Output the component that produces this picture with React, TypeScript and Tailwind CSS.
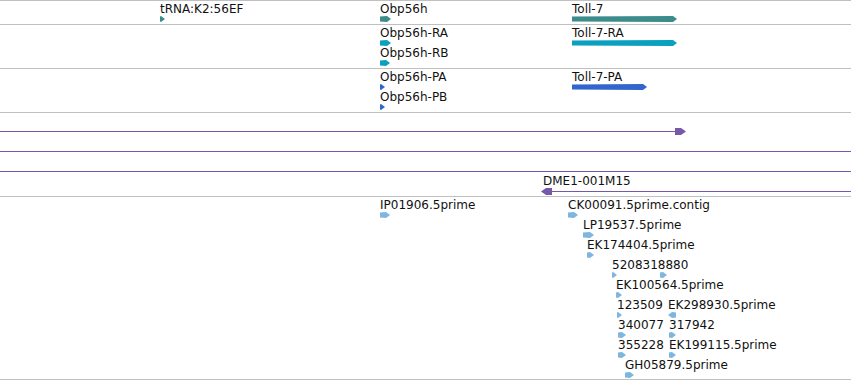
type Feat = {
  label?: string;
  lx?: number;
  x: number;
  w: number;
  row: number;
  dir?: "r" | "l";
  color: string;
};

const TEAL = "#3c8c8c";
const CYAN = "#0aa0bf";
const BLUE = "#3366cc";
const EST = "#7eb6e0";
const PURPLE = "#7659a8";

function Glyph({ w, dir = "r", color }: { w: number; dir?: "r" | "l"; color: string }) {
  const tip = Math.min(4, w);
  const pts =
    dir === "r"
      ? `0,0.5 ${w - tip},0 ${w},3 ${w - tip},6 0,5.5`
      : `${w},0.5 ${tip},0 0,3 ${tip},6 ${w},5.5`;
  return (
    <svg width={w} height={6} className="block">
      <polygon points={pts} fill={color} />
    </svg>
  );
}

// features sit at their genome coordinates on the track canvas
function Feature({ f }: { f: Feat }) {
  const top = f.row * 20;
  return (
    <>
      {f.label && (
        <div
          className="absolute whitespace-nowrap leading-[14px] text-[#111]"
          style={{ left: f.lx ?? f.x, top: top + 1 }}
        >
          {f.label}
        </div>
      )}
      <div className="absolute" style={{ left: f.x, top: top + 15 }}>
        <Glyph w={f.w} dir={f.dir} color={f.color} />
      </div>
    </>
  );
}

const genes: Feat[] = [
  { label: "tRNA:K2:56EF", x: 160, w: 5, row: 0, color: TEAL },
  { label: "Obp56h", x: 380, w: 11, row: 0, color: TEAL },
  { label: "Toll-7", x: 572, w: 105, row: 0, color: TEAL },
];

const transcripts: Feat[] = [
  { label: "Obp56h-RA", x: 380, w: 11, row: 0, color: CYAN },
  { label: "Obp56h-RB", x: 380, w: 10, row: 1, color: CYAN },
  { label: "Toll-7-RA", x: 572, w: 105, row: 0, color: CYAN },
];

const proteins: Feat[] = [
  { label: "Obp56h-PA", x: 380, w: 5, row: 0, color: BLUE },
  { label: "Obp56h-PB", x: 380, w: 5, row: 1, color: BLUE },
  { label: "Toll-7-PA", x: 572, w: 75, row: 0, color: BLUE },
];

const ests: Feat[] = [
  { label: "IP01906.5prime", x: 380, w: 10, row: 0, color: EST },
  { label: "CK00091.5prime.contig", x: 568, w: 10, row: 0, color: EST },
  { label: "LP19537.5prime", x: 583, w: 11, row: 1, color: EST },
  { label: "EK174404.5prime", x: 587, w: 7, row: 2, color: EST },
  { label: "5208318880", x: 612, w: 5, row: 3, color: EST },
  { x: 660, w: 7, row: 3, color: EST },
  { label: "EK100564.5prime", x: 616, w: 6, row: 4, color: EST },
  { label: "123509", x: 617, w: 5, row: 5, color: EST },
  { label: "EK298930.5prime", x: 668, w: 8, row: 5, dir: "l", color: EST },
  { label: "340077", x: 618, w: 8, row: 6, color: EST },
  { label: "317942", x: 669, w: 7, row: 6, color: EST },
  { label: "355228", x: 618, w: 8, row: 7, color: EST },
  { label: "EK199115.5prime", x: 669, w: 7, row: 7, color: EST },
  { label: "GH05879.5prime", x: 625, w: 9, row: 8, color: EST },
];

function Track({ h, feats, last }: { h: string; feats: Feat[]; last?: boolean }) {
  return (
    <div className={`relative border-t border-[#c0c0c0] ${h} ${last ? "border-b" : ""}`}>
      {feats.map((f, i) => (
        <Feature key={i} f={f} />
      ))}
    </div>
  );
}

function ClonesTrack() {
  return (
    <div className="relative h-[84px] border-t border-[#c0c0c0]">
      <svg width={851} height={83} className="absolute left-0 top-0">
        <line x1={0} y1={18.5} x2={676} y2={18.5} stroke={PURPLE} strokeWidth={1} />
        <polygon points="675,15 681,15 686,18.5 681,22 675,22" fill={PURPLE} />
        <line x1={0} y1={38.5} x2={851} y2={38.5} stroke={PURPLE} strokeWidth={1} />
        <line x1={0} y1={58.5} x2={851} y2={58.5} stroke={PURPLE} strokeWidth={1} />
        <line x1={549} y1={78.5} x2={851} y2={78.5} stroke={PURPLE} strokeWidth={1} />
        <polygon points="552,75 546,75 541,78.5 546,82 552,82" fill={PURPLE} />
      </svg>
      <div className="absolute left-[543px] top-[61px] whitespace-nowrap leading-[14px] text-[#111]">
        DME1-001M15
      </div>
    </div>
  );
}

export default function App() {
  return (
    <div className="flex flex-col w-[851px] h-[380px] overflow-hidden bg-white font-['DejaVu_Sans',sans-serif] text-[12px]">
      <Track h="h-[24px]" feats={genes} />
      <Track h="h-[44px]" feats={transcripts} />
      <Track h="h-[44px]" feats={proteins} />
      <ClonesTrack />
      <Track h="h-[184px]" feats={ests} last />
    </div>
  );
}
